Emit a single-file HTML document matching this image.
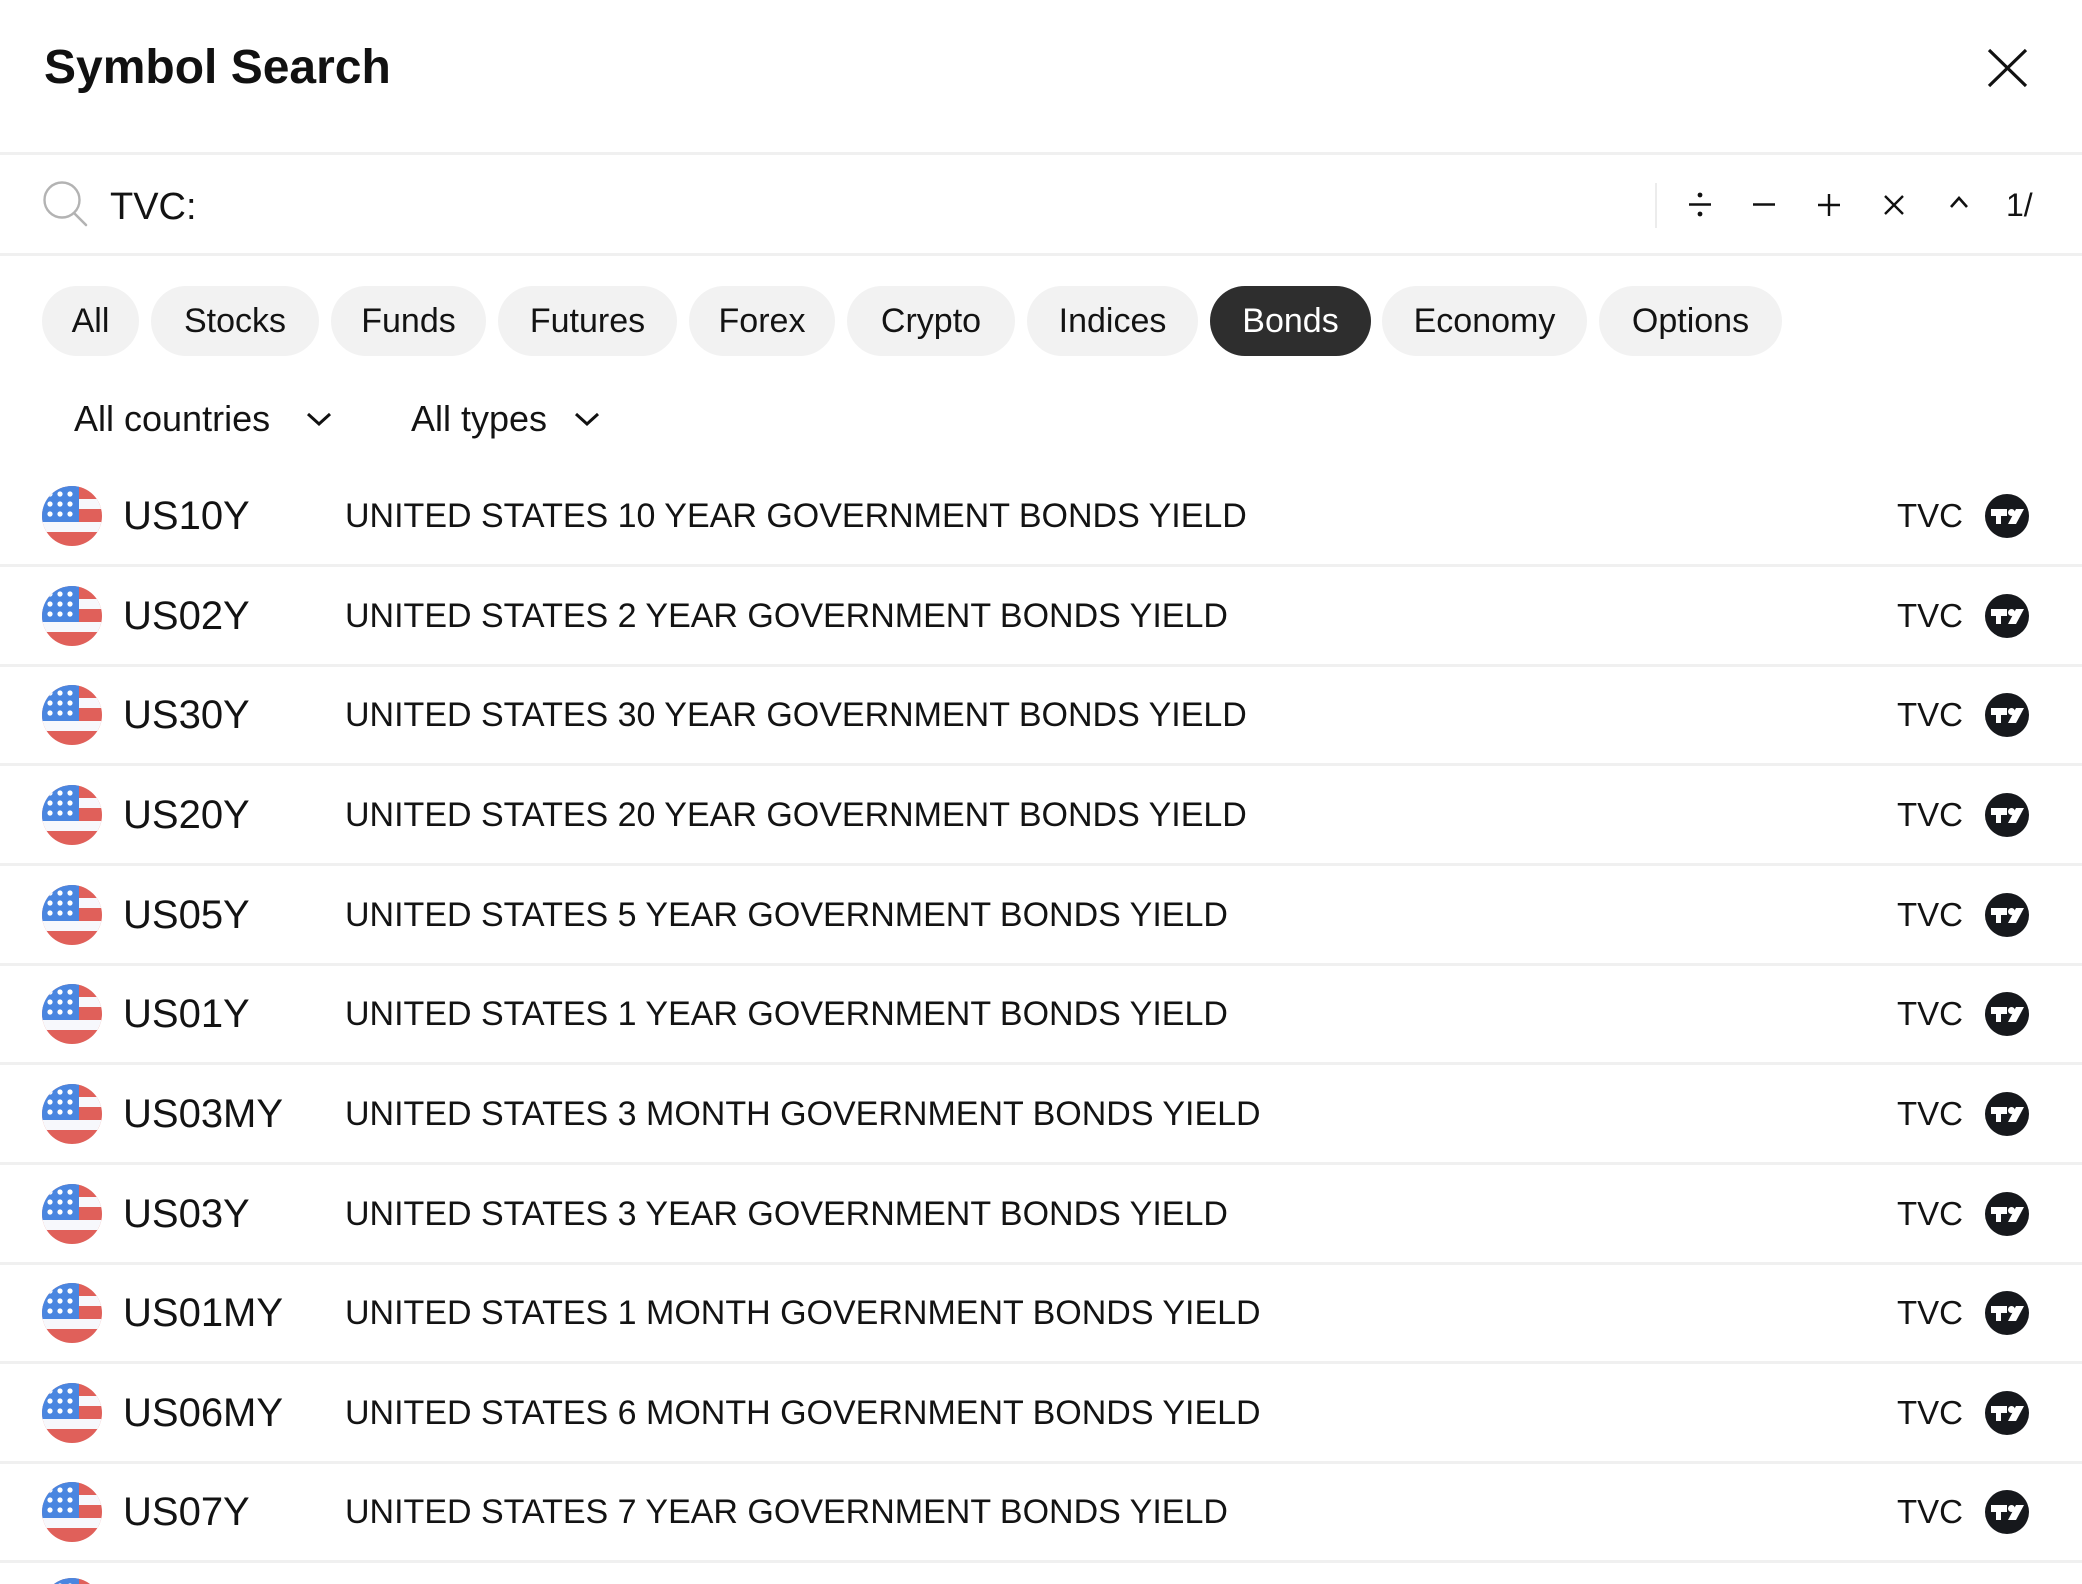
<!DOCTYPE html>
<html style="width:2082px;height:1584px;overflow:hidden"><head><meta charset="utf-8"><style>
*{margin:0;padding:0;box-sizing:border-box}
html,body{width:2082px;height:1584px;overflow:hidden}
body{background:#fff;font-family:"Liberation Sans",Arial,sans-serif;color:#131313;position:relative}
#w{position:relative;width:2082px;height:1584px;overflow:hidden}
.a{position:absolute;white-space:nowrap}
.hr{position:absolute;left:0;width:2082px;height:3px;background:#f0f0f0}
.pill{position:absolute;top:286px;height:70px;line-height:70px;border-radius:35px;background:#f2f2f2;font-size:34px;text-align:center;color:#131313}
.pill.on{background:#2e2e2e;color:#fff}
.row{position:absolute;left:0;width:2082px;height:100px}
.row .f{position:absolute;left:42px;top:20px;width:60px;height:60px}
.row .s{position:absolute;left:123px;top:25px;height:50px;line-height:50px;font-size:40px}
.row .d{position:absolute;left:345px;top:25px;height:50px;line-height:50px;font-size:34px}
.row .t{position:absolute;left:1897px;top:25px;height:50px;line-height:50px;font-size:33px}
.row .l{position:absolute;left:1985px;top:28px;width:44px;height:44px}
.row .sep{position:absolute;left:0;top:98px;width:2082px;height:3px;background:#f0f0f0}
</style></head><body><div id="w">
<svg width="0" height="0" style="position:absolute"><defs>
<clipPath id="c"><circle cx="30" cy="30" r="30"/></clipPath>
<g id="flag"><g clip-path="url(#c)">
<rect width="60" height="60" fill="#e0605a"/>
<rect y="13" width="60" height="10" fill="#f7f8fc"/>
<rect y="36" width="60" height="10" fill="#f7f8fc"/>
<rect width="37" height="36" fill="#4a86e0"/>
<g fill="#fff"><circle cx="8" cy="8" r="2.6"/><circle cx="18" cy="8" r="2.6"/><circle cx="28" cy="8" r="2.6"/>
<circle cx="8" cy="18" r="2.6"/><circle cx="18" cy="18" r="2.6"/><circle cx="28" cy="18" r="2.6"/>
<circle cx="8" cy="28" r="2.6"/><circle cx="18" cy="28" r="2.6"/><circle cx="28" cy="28" r="2.6"/></g>
</g></g>
<g id="tv"><circle cx="22" cy="22" r="22" fill="#16181c"/>
<path d="M6 15h16v7h-6v8h-5v-8H6z" fill="#fff"/>
<circle cx="26.5" cy="18.5" r="3.5" fill="#fff"/>
<path d="M31 15h8l-8 15h-8z" fill="#fff"/></g>
</defs></svg>

<div class="a" style="left:44px;top:40px;height:56px;line-height:56px;font-size:48px;font-weight:bold;color:#111">Symbol Search</div>
<svg class="a" style="left:1986px;top:47px" width="43" height="42"><path d="M3 3L40 39M40 3L3 39" stroke="#111" stroke-width="3.2" fill="none"/></svg>

<div class="hr" style="top:152px"></div>
<svg class="a" style="left:40px;top:180px" width="50" height="50"><circle cx="22" cy="20" r="17.5" stroke="#b3b3b3" stroke-width="2.4" fill="none"/><path d="M34 33L46 45" stroke="#b3b3b3" stroke-width="2.6" stroke-linecap="round"/></svg>
<div class="a" style="left:110px;top:183px;height:48px;line-height:48px;font-size:38px">TVC:</div>
<div class="a" style="left:1655px;top:183px;width:2px;height:45px;background:#ececec"></div>
<svg class="a" style="left:1688px;top:190px" width="24" height="30"><circle cx="12" cy="5" r="2.4" fill="#111"/><circle cx="12" cy="24" r="2.4" fill="#111"/><path d="M1 14.5h22" stroke="#111" stroke-width="2.4"/></svg>
<svg class="a" style="left:1752px;top:190px" width="24" height="30"><path d="M1 14.5h22" stroke="#111" stroke-width="2.4"/></svg>
<svg class="a" style="left:1817px;top:193px" width="24" height="24"><path d="M1 12h22M12 1v22" stroke="#111" stroke-width="2.4"/></svg>
<svg class="a" style="left:1883px;top:194px" width="22" height="22"><path d="M2 2L20 20M20 2L2 20" stroke="#111" stroke-width="2.4"/></svg>
<svg class="a" style="left:1949px;top:195px" width="20" height="14"><path d="M2 12L10 3L18 12" stroke="#111" stroke-width="2.6" fill="none"/></svg>
<div class="a" style="left:2006px;top:186px;height:38px;line-height:38px;font-size:32px">1/</div>
<div class="hr" style="top:253px"></div>

<div class="pill" style="left:42px;width:97px">All</div>
<div class="pill" style="left:151px;width:168px">Stocks</div>
<div class="pill" style="left:331px;width:155px">Funds</div>
<div class="pill" style="left:498px;width:179px">Futures</div>
<div class="pill" style="left:689px;width:146px">Forex</div>
<div class="pill" style="left:847px;width:168px">Crypto</div>
<div class="pill" style="left:1027px;width:171px">Indices</div>
<div class="pill on" style="left:1210px;width:161px">Bonds</div>
<div class="pill" style="left:1382px;width:205px">Economy</div>
<div class="pill" style="left:1599px;width:183px">Options</div>

<div class="a" style="left:74px;top:397px;height:44px;line-height:44px;font-size:36px">All countries</div>
<svg class="a" style="left:305px;top:410px" width="28" height="18"><path d="M3 4L14 14L25 4" stroke="#111" stroke-width="3" fill="none"/></svg>
<div class="a" style="left:411px;top:397px;height:44px;line-height:44px;font-size:36px">All types</div>
<svg class="a" style="left:573px;top:410px" width="28" height="18"><path d="M3 4L14 14L25 4" stroke="#111" stroke-width="3" fill="none"/></svg>

<div class="row" style="top:466px"><svg class="f"><use href="#flag"/></svg><div class="s">US10Y</div><div class="d">UNITED STATES 10 YEAR GOVERNMENT BONDS YIELD</div><div class="t">TVC</div><svg class="l"><use href="#tv"/></svg><div class="sep"></div></div>
<div class="row" style="top:566px"><svg class="f"><use href="#flag"/></svg><div class="s">US02Y</div><div class="d">UNITED STATES 2 YEAR GOVERNMENT BONDS YIELD</div><div class="t">TVC</div><svg class="l"><use href="#tv"/></svg><div class="sep"></div></div>
<div class="row" style="top:665px"><svg class="f"><use href="#flag"/></svg><div class="s">US30Y</div><div class="d">UNITED STATES 30 YEAR GOVERNMENT BONDS YIELD</div><div class="t">TVC</div><svg class="l"><use href="#tv"/></svg><div class="sep"></div></div>
<div class="row" style="top:765px"><svg class="f"><use href="#flag"/></svg><div class="s">US20Y</div><div class="d">UNITED STATES 20 YEAR GOVERNMENT BONDS YIELD</div><div class="t">TVC</div><svg class="l"><use href="#tv"/></svg><div class="sep"></div></div>
<div class="row" style="top:865px"><svg class="f"><use href="#flag"/></svg><div class="s">US05Y</div><div class="d">UNITED STATES 5 YEAR GOVERNMENT BONDS YIELD</div><div class="t">TVC</div><svg class="l"><use href="#tv"/></svg><div class="sep"></div></div>
<div class="row" style="top:964px"><svg class="f"><use href="#flag"/></svg><div class="s">US01Y</div><div class="d">UNITED STATES 1 YEAR GOVERNMENT BONDS YIELD</div><div class="t">TVC</div><svg class="l"><use href="#tv"/></svg><div class="sep"></div></div>
<div class="row" style="top:1064px"><svg class="f"><use href="#flag"/></svg><div class="s">US03MY</div><div class="d">UNITED STATES 3 MONTH GOVERNMENT BONDS YIELD</div><div class="t">TVC</div><svg class="l"><use href="#tv"/></svg><div class="sep"></div></div>
<div class="row" style="top:1164px"><svg class="f"><use href="#flag"/></svg><div class="s">US03Y</div><div class="d">UNITED STATES 3 YEAR GOVERNMENT BONDS YIELD</div><div class="t">TVC</div><svg class="l"><use href="#tv"/></svg><div class="sep"></div></div>
<div class="row" style="top:1263px"><svg class="f"><use href="#flag"/></svg><div class="s">US01MY</div><div class="d">UNITED STATES 1 MONTH GOVERNMENT BONDS YIELD</div><div class="t">TVC</div><svg class="l"><use href="#tv"/></svg><div class="sep"></div></div>
<div class="row" style="top:1363px"><svg class="f"><use href="#flag"/></svg><div class="s">US06MY</div><div class="d">UNITED STATES 6 MONTH GOVERNMENT BONDS YIELD</div><div class="t">TVC</div><svg class="l"><use href="#tv"/></svg><div class="sep"></div></div>
<div class="row" style="top:1462px"><svg class="f"><use href="#flag"/></svg><div class="s">US07Y</div><div class="d">UNITED STATES 7 YEAR GOVERNMENT BONDS YIELD</div><div class="t">TVC</div><svg class="l"><use href="#tv"/></svg><div class="sep"></div></div>
<div class="a" style="left:42px;top:1578px;width:60px;height:6px;overflow:hidden"><svg width="60" height="60" style="display:block"><use href="#flag"/></svg></div>
</div></body></html>
